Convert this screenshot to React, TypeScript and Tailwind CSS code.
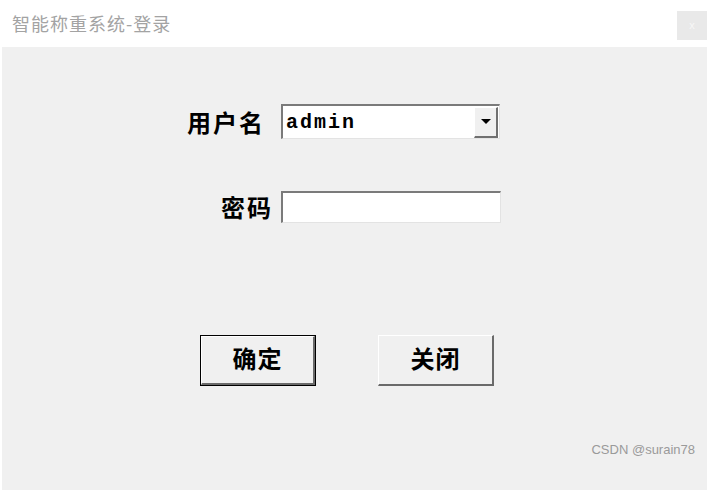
export default function App() {
  const cjk = "font-['Noto_Sans_CJK_SC',sans-serif]";
  return (
    <div className="w-[709px] h-[493px] bg-white flex flex-col overflow-hidden">
      {/* Title bar */}
      <div className="h-[47px] flex items-start justify-between shrink-0">
        <div className={`${cjk} pl-[12px] pt-[11px] text-[18px] leading-[24px] text-[#a3a3a3] tracking-[1px]`}>
          智能称重系统-登录
        </div>
        <div className="mt-[11px] mr-[2px] w-[30px] h-[29px] bg-[#e9e9e9] flex items-center justify-center text-[11px] text-[#f7f7f7] font-['Liberation_Sans',sans-serif]">
          x
        </div>
      </div>

      {/* Body */}
      <div className="flex-1 mx-[2px] mb-[3px] bg-[#f0f0f0] flex flex-col relative">
        {/* User row */}
        <div className="flex items-center mt-[57px] pl-[185px] h-[35px]">
          <span className={`${cjk} font-bold text-[24px] tracking-[2px] text-black`}>用户名</span>
          <div className="ml-[16px] w-[219px] h-[35px] bg-white border-t-2 border-l-2 border-[#7a7a7a] border-b border-r border-b-[#e3e3e3] border-r-[#e3e3e3] flex items-center">
            <span className="pl-[3px] pt-[2px] flex-1 font-['Liberation_Mono',monospace] font-bold text-[20px] tracking-[2px] text-black">
              admin
            </span>
            <div className="w-[24px] h-[31px] mr-[1px] bg-[#f0f0f0] border-t border-l border-white border-b-2 border-r-2 border-b-[#707070] border-r-[#707070] flex items-center justify-center">
              <div className="w-0 h-0 border-l-[5px] border-r-[5px] border-t-[5px] border-l-transparent border-r-transparent border-t-black" />
            </div>
          </div>
        </div>

        {/* Password row */}
        <div className="flex items-center mt-[52px] pl-[219px] h-[32px]">
          <span className={`${cjk} font-bold text-[24px] tracking-[2px] text-black`}>密码</span>
          <div className="ml-[8px] w-[220px] h-[32px] bg-white border-t-2 border-l-2 border-[#7a7a7a] border-b border-r border-b-[#e3e3e3] border-r-[#e3e3e3]" />
        </div>

        {/* Buttons */}
        <div className="flex mt-[112px] pl-[198px] gap-[62px]">
          <button className="w-[116px] h-[51px] border border-black bg-[#f0f0f0] p-0">
            <div className="w-full h-full border-t border-l border-white border-b-2 border-r-2 border-b-[#6a6a6a] border-r-[#6a6a6a] flex items-center justify-center pb-[4px]">
              <span className={`${cjk} font-bold text-[24px] tracking-[1px] text-black`}>确定</span>
            </div>
          </button>
          <button className="w-[116px] h-[51px] bg-[#f0f0f0] border-t border-l border-white border-b-2 border-r-2 border-b-[#6a6a6a] border-r-[#6a6a6a] flex items-center justify-center pb-[4px]">
            <span className={`${cjk} font-bold text-[24px] tracking-[1px] text-black`}>关闭</span>
          </button>
        </div>

        {/* Watermark */}
        <div className="absolute right-[12px] bottom-[31px] font-['Liberation_Sans',sans-serif] text-[13px] text-[#9a9a9a]">
          CSDN @surain78
        </div>
      </div>
    </div>
  );
}
